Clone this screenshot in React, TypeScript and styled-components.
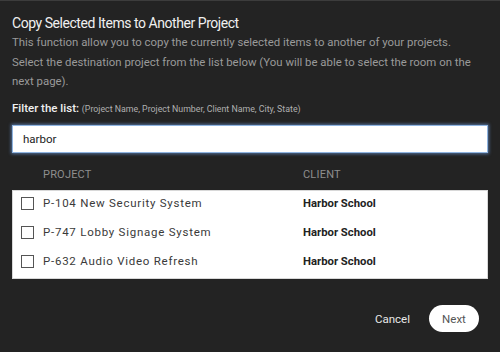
import React, { useState } from 'react';
import styled, { createGlobalStyle } from 'styled-components';

const GlobalStyle = createGlobalStyle`
  html, body {
    margin: 0;
    padding: 0;
    background: #232323;
  }
  body {
    font-family: Roboto, 'Noto Sans', sans-serif;
    color: #ededed;
  }
`;

const Dialog = styled.div`
  width: 500px;
  height: 352px;
  box-sizing: border-box;
  background: #232323;
  border-top: 1px solid #3c3c3c;
  padding: 13px 12px 0 12px;
  display: flex;
  flex-direction: column;
`;

const Title = styled.h2`
  margin: 0;
  font-size: 14px;
  font-weight: 400;
  letter-spacing: -0.45px;
  color: #f0f0f0;
  line-height: 19px;
`;

const Text = styled.p`
  margin: 0;
  font-size: 11.4px;
  line-height: 19px;
  color: #9a9a9a;

  & + & {
    margin-top: 1px;
  }
`;

const FilterLabel = styled.label`
  margin-top: 9px;
  font-size: 11.5px;
  line-height: 16px;
  color: #f0f0f0;
  font-weight: 500;

  span {
    font-size: 8.8px;
    font-weight: 400;
    color: #b0b0b0;
  }
`;

const FilterInput = styled.input`
  margin-top: 8px;
  height: 28px;
  box-sizing: border-box;
  border: 1px solid #8fb4e0;
  box-shadow: 0 0 3px 1px rgba(110, 160, 230, 0.6);
  background: #fff;
  padding: 0 10px;
  font-family: inherit;
  font-size: 11.5px;
  color: #222;
  outline: none;
`;

const Columns = styled.div`
  display: grid;
  grid-template-columns: 260px 1fr;
  padding: 15px 0 0 31px;
  height: 37px;
  box-sizing: border-box;
  font-size: 11px;
  line-height: 14px;
  color: #8e8e8e;
  text-transform: uppercase;
  letter-spacing: 0.2px;
`;

const Table = styled.div`
  background: #fff;
  border: 1px solid #d8d8d8;
  display: flex;
  flex-direction: column;
`;

const Row = styled.label`
  display: grid;
  grid-template-columns: 22px 260px 1fr;
  align-items: center;
  height: 29px;
  box-sizing: border-box;
  padding: 0 0 5px 8px;
  font-size: 11.5px;
  color: #3a3a3a;
  cursor: pointer;
`;

const Check = styled.span<{ $checked: boolean }>`
  width: 11px;
  height: 11px;
  border: 1px solid #555;
  background: ${(p) => (p.$checked ? '#555' : '#fff')};
`;

const ProjectName = styled.span`
  letter-spacing: 0.75px;
`;

const Client = styled.span`
  font-size: 11.3px;
  font-weight: 700;
  color: #222;
`;

const Footer = styled.div`
  margin-top: 26px;
  display: flex;
  justify-content: flex-end;
  align-items: center;
  gap: 19px;
  padding-right: 9px;
`;

const CancelButton = styled.button`
  background: none;
  border: none;
  color: #e8e8e8;
  font-family: inherit;
  font-size: 11.5px;
  cursor: pointer;
  padding: 0;
`;

const NextButton = styled.button`
  background: #fff;
  border: none;
  border-radius: 14px;
  width: 50px;
  height: 27px;
  color: #555;
  font-family: inherit;
  font-size: 11.5px;
  cursor: pointer;
`;

const projects = [
  { id: 'P-104', name: 'New Security System', client: 'Harbor School' },
  { id: 'P-747', name: 'Lobby Signage System', client: 'Harbor School' },
  { id: 'P-632', name: 'Audio Video Refresh', client: 'Harbor School' },
];

export default function App() {
  const [filter, setFilter] = useState('harbor');
  const [selected, setSelected] = useState<string[]>([]);

  const toggle = (id: string) =>
    setSelected((s) => (s.includes(id) ? s.filter((x) => x !== id) : [...s, id]));

  return (
    <>
      <GlobalStyle />
      <Dialog>
        <Title>Copy Selected Items to Another Project</Title>
        <Text>This function allow you to copy the currently selected items to another of your projects.</Text>
        <Text>
          Select the destination project from the list below (You will be able to select the room on the
          next page).
        </Text>
        <FilterLabel>
          Filter the list: <span>(Project Name, Project Number, Client Name, City, State)</span>
        </FilterLabel>
        <FilterInput value={filter} onChange={(e) => setFilter(e.target.value)} autoFocus />
        <Columns>
          <span>Project</span>
          <span>Client</span>
        </Columns>
        <Table>
          {projects.map((p) => (
            <Row key={p.id} onClick={() => toggle(p.id)}>
              <Check $checked={selected.includes(p.id)} />
              <ProjectName>
                {p.id} {p.name}
              </ProjectName>
              <Client>{p.client}</Client>
            </Row>
          ))}
        </Table>
        <Footer>
          <CancelButton>Cancel</CancelButton>
          <NextButton>Next</NextButton>
        </Footer>
      </Dialog>
    </>
  );
}
